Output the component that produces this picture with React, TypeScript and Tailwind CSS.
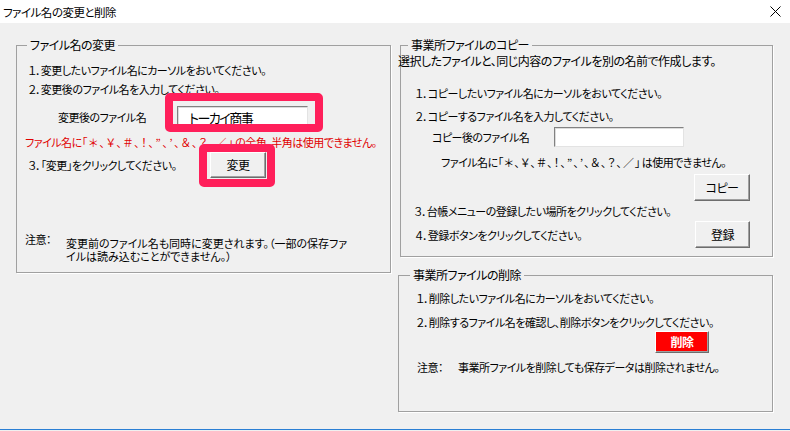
import type { ReactNode } from "react";

const jp = "font-['Noto_Sans_CJK_JP',sans-serif] [font-feature-settings:'palt'] tracking-[-0.5px]";
const symbols = "「＊、￥、＃、！、”、’、＆、？、／」";

function GroupBox({
  label,
  labelLeft,
  className,
  children,
}: {
  label: string;
  labelLeft: string;
  className: string;
  children: ReactNode;
}) {
  return (
    <div className={`relative border border-[#a0a0a0] shadow-[1px_1px_0_#ffffff] ${className}`}>
      <span
        className={`absolute top-[-9px] h-[16px] leading-[16px] bg-[#f0f0f0] px-[3px] text-[12px] ${labelLeft}`}
      >
        {label}
      </span>
      {children}
    </div>
  );
}

function WinButton({
  children,
  className,
  red,
}: {
  children: ReactNode;
  className: string;
  red?: boolean;
}) {
  return (
    <button
      className={`flex items-center justify-center border border-t-white border-l-white border-b-[#6d6d6d] border-r-[#6d6d6d] shadow-[inset_-1px_-1px_0_#a0a0a0] text-[12px] ${
        red ? "bg-[#ff0000] text-white font-bold" : "bg-[#f0f0f0] text-black"
      } ${className}`}
    >
      {children}
    </button>
  );
}

function TextBox({ value, className }: { value?: string; className: string }) {
  return (
    <div
      className={`flex items-center bg-white border border-t-[#828282] border-l-[#828282] border-b-[#e3e3e3] border-r-[#e3e3e3] shadow-[inset_1px_1px_0_#dcdcdc] ${className}`}
    >
      {value && <span className="pl-[11px] text-[13px] tracking-[-1.5px] leading-none">{value}</span>}
    </div>
  );
}

export default function App() {
  return (
    <div className={`w-[790px] h-[431px] bg-[#f0f0f0] text-[11px] text-black ${jp}`}>
      {/* title bar */}
      <div className="h-[23px] bg-white flex items-center justify-between pl-[3px] pr-[9px]">
        <span className="text-[11.5px] leading-[16px]">ファイル名の変更と削除</span>
        <svg width="11" height="11" viewBox="0 0 11 11">
          <path d="M0.5 0.5 L10.5 10.5 M10.5 0.5 L0.5 10.5" stroke="#000" strokeWidth="1" />
        </svg>
      </div>

      <div className="h-[407px] border-b border-[#2a7fd4] flex">
        {/* left group */}
        <GroupBox
          label="ファイル名の変更"
          labelLeft="left-[10px]"
          className="ml-[16px] mt-[22px] w-[375px] h-[228px]"
        >
          <div className="flex flex-col">
            <div className="mt-[16px] h-[16px] leading-[16px] pl-[11px]">
              １．変更したいファイル名にカーソルをおいてください。
            </div>
            <div className="mt-[3px] h-[16px] leading-[16px] pl-[11px]">
              ２．変更後のファイル名を入力してください。
            </div>
            <div className="mt-[9px] flex items-center">
              <span className="ml-[41px] w-[119px] leading-[16px]">変更後のファイル名</span>
              <TextBox value="トーカイ商事" className="w-[131px] h-[22px]" />
            </div>
            <div className="mt-[6px] h-[16px] leading-[16px] pl-[8px] text-[#e00000] whitespace-nowrap">
              ファイル名に<span className="tracking-[1.6px]">{symbols}</span>の全角、半角は使用できません。
            </div>
            <div className="mt-[2px] flex items-center">
              <span className="pl-[11px] w-[193px] leading-[16px]">３．「変更」をクリックしてください。</span>
              <WinButton className="w-[56px] h-[26px]">変更</WinButton>
            </div>
            <div className="mt-[53px] flex">
              <span className="pl-[8px] w-[49px] h-[16px] leading-[16px]">注意：</span>
              <div className="mt-[6px] tracking-[0px]">
                <div className="h-[13px] leading-[13px]">変更前のファイル名も同時に変更されます。（一部の保存ファ</div>
                <div className="h-[13px] leading-[13px]">イルは読み込むことができません。）</div>
              </div>
            </div>
          </div>

          {/* highlight frames */}
          <div className="absolute left-[148px] top-[47px] w-[158px] h-[39px] border-[8px] border-[#ff1f5a] rounded-[5px]" />
          <div className="absolute left-[182px] top-[98px] w-[76px] h-[43px] border-[8px] border-[#ff1f5a] rounded-[5px]" />
        </GroupBox>

        {/* right column */}
        <div className="flex flex-col ml-[9px]">
          <GroupBox
            label="事業所ファイルのコピー"
            labelLeft="left-[7px]"
            className="mt-[22px] w-[373px] h-[212px]"
          >
            <div className="flex flex-col">
              <div className="mt-[7px] ml-[-3px] h-[16px] leading-[16px] whitespace-nowrap text-[12px]">
                選択したファイルと、同じ内容のファイルを別の名前で作成します。
              </div>
              <div className="mt-[16px] h-[16px] leading-[16px] pl-[14px]">
                １．コピーしたいファイル名にカーソルをおいてください。
              </div>
              <div className="mt-[7px] h-[16px] leading-[16px] pl-[14px]">
                ２．コピーするファイル名を入力してください。
              </div>
              <div className="mt-[3px] flex items-center">
                <span className="ml-[31px] w-[122px] leading-[16px]">コピー後のファイル名</span>
                <TextBox className="w-[130px] h-[20px]" />
              </div>
              <div className="mt-[7px] h-[16px] leading-[16px] pl-[40px] whitespace-nowrap">
                ファイル名に<span className="tracking-[1.1px]">{symbols}</span>は使用できません。
              </div>
              <WinButton className="mt-[4px] ml-[293px] w-[56px] h-[27px]">コピー</WinButton>
              <div className="mt-[2px] h-[16px] leading-[16px] pl-[13px]">
                ３．台帳メニューの登録したい場所をクリックしてください。
              </div>
              <div className="mt-[2px] flex items-center">
                <span className="pl-[14px] w-[294px] leading-[16px]">４．登録ボタンをクリックしてください。</span>
                <WinButton className="w-[55px] h-[27px]">登録</WinButton>
              </div>
            </div>
          </GroupBox>

          <GroupBox
            label="事業所ファイルの削除"
            labelLeft="left-[11px]"
            className="mt-[18px] ml-[-2px] w-[375px] h-[137px]"
          >
            <div className="flex flex-col">
              <div className="mt-[14px] h-[16px] leading-[16px] pl-[17px]">
                １．削除したいファイル名にカーソルをおいてください。
              </div>
              <div className="mt-[8px] h-[16px] leading-[16px] pl-[17px] whitespace-nowrap">
                ２．削除するファイル名を確認し、削除ボタンをクリックしてください。
              </div>
              <WinButton red className="mt-[1px] ml-[256px] w-[54px] h-[22px]">
                削除
              </WinButton>
              <div className="mt-[6px] flex h-[16px] leading-[16px] pl-[18px]">
                <span className="w-[41px]">注意：</span>
                <span className="whitespace-nowrap">事業所ファイルを削除しても保存データは削除されません。</span>
              </div>
            </div>
          </GroupBox>
        </div>
      </div>
    </div>
  );
}
